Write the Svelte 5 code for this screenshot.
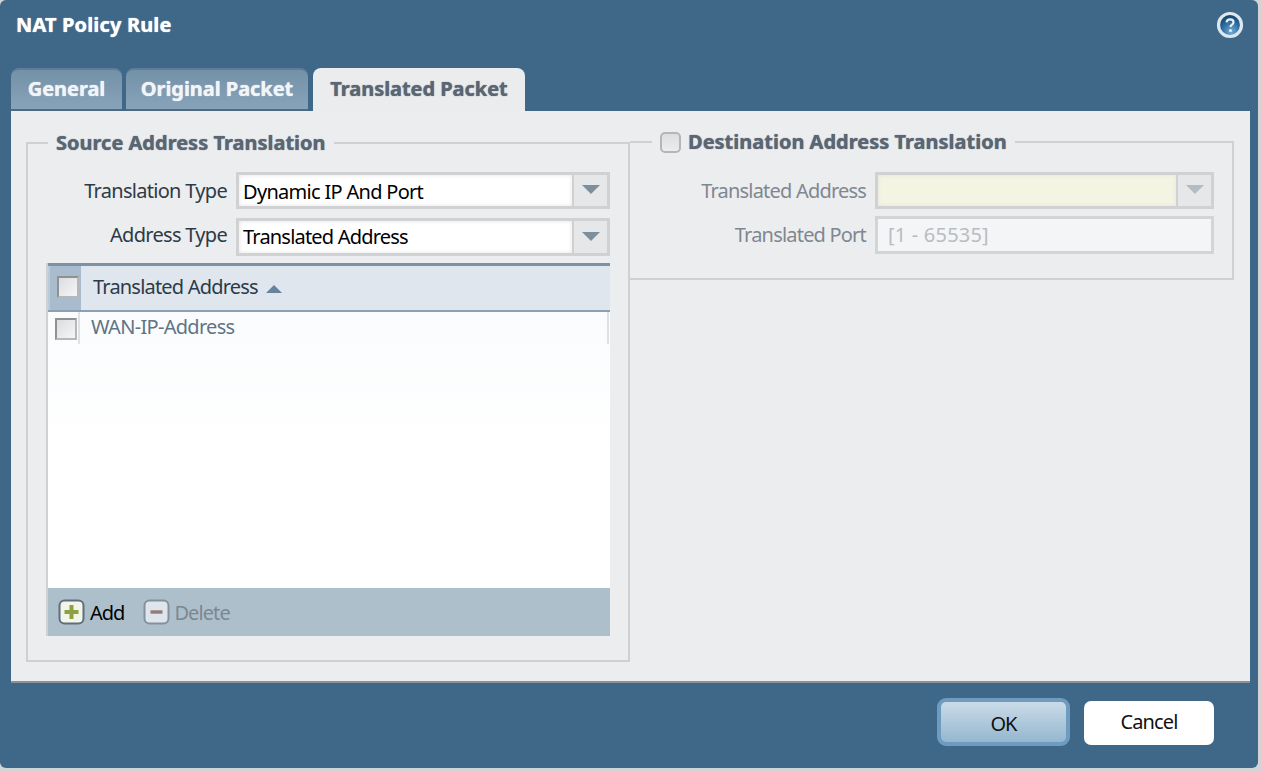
<script>
  const tabs = [
    { label: 'General', w: 111 },
    { label: 'Original Packet', w: 182 },
    { label: 'Translated Packet', w: 212, active: true }
  ];
</script>

<div class="page">
  <div class="dialog">
    <header class="titlebar">
      <h1>NAT Policy Rule</h1>
      <svg class="help" width="28" height="28" viewBox="0 0 28 28" aria-hidden="true">
        <defs>
          <radialGradient id="hg" cx="55%" cy="78%" r="72%">
            <stop offset="0" stop-color="#74aed6" />
            <stop offset="0.55" stop-color="#2f6d9f" />
            <stop offset="1" stop-color="#123f6b" />
          </radialGradient>
        </defs>
        <circle cx="14" cy="14" r="11.5" fill="url(#hg)" stroke="#dce7ee" stroke-width="3.2" />
        <path d="M10.6 11.4c.2-2 1.6-3 3.5-3 2 0 3.4 1.1 3.4 2.8 0 1.4-.8 2-1.7 2.7-.9.6-1.3 1-1.3 2" fill="none" stroke="#e8eff4" stroke-width="2.2" />
        <circle cx="14.5" cy="19.4" r="1.5" fill="#e8eff4" />
      </svg>
    </header>

    <nav class="tabs">
      {#each tabs as t}
        <div class="tab" class:active={t.active} style="width:{t.w}px">{t.label}</div>
      {/each}
    </nav>

    <main class="panel">
      <fieldset class="group left">
        <legend>Source Address Translation</legend>
        <div class="row r1">
          <span class="lbl">Translation Type</span>
          <div class="combo"><div class="val">Dynamic IP And Port</div><div class="arrow"><i></i></div></div>
        </div>
        <div class="row r2">
          <span class="lbl">Address Type</span>
          <div class="combo"><div class="val">Translated Address</div><div class="arrow"><i></i></div></div>
        </div>

        <div class="table">
          <div class="thead">
            <div class="cbcol"><span class="check"></span></div>
            <div class="th">Translated Address <i class="sort"></i></div>
          </div>
          <div class="tr">
            <div class="cbcell"><span class="check"></span></div>
            <div class="td">WAN-IP-Address</div>
          </div>
          <div class="tfill"></div>
          <div class="tfoot">
            <svg width="28" height="26" viewBox="0 0 28 26" aria-hidden="true">
              <rect x="1.5" y="1.5" width="24" height="23" rx="5" fill="#f3f5e8" stroke="#5e6f7c" stroke-width="2" />
              <path d="M13.5 6v14M6.5 13h14" stroke="#8ea142" stroke-width="4" />
            </svg>
            <span class="add">Add</span>
            <svg class="del" width="28" height="26" viewBox="0 0 28 26" aria-hidden="true">
              <rect x="1.5" y="1.5" width="24" height="23" rx="5" fill="#dfe5ec" stroke="#83919d" stroke-width="2" />
              <path d="M7.5 13h12" stroke="#957a7a" stroke-width="3.4" />
            </svg>
            <span class="delete">Delete</span>
          </div>
        </div>
      </fieldset>

      <fieldset class="group right">
        <legend><span class="legcheck"></span>Destination Address Translation</legend>
        <div class="row r3">
          <span class="lbl dim">Translated Address</span>
          <div class="combo off"><div class="val yellow"></div><div class="arrow"><i></i></div></div>
        </div>
        <div class="row r4">
          <span class="lbl dim">Translated Port</span>
          <div class="port">[1 - 65535]</div>
        </div>
      </fieldset>
    </main>

    <footer class="actions">
      <div class="btn ok">OK</div>
      <div class="btn cancel">Cancel</div>
    </footer>
  </div>
</div>

<style>
  :global(body) { margin: 0; background: #d2d4d6; }
  .page {
    width: 1262px;
    height: 772px;
    overflow: hidden;
    font-family: "Noto Sans", "Open Sans", sans-serif;
    font-size: 20px;
  }
  .dialog {
    box-sizing: border-box;
    width: 1258px;
    height: 768px;
    padding: 0 8px 0 11px;
    background: #3f6888;
    border-radius: 6px;
    display: flex;
    flex-direction: column;
  }
  .titlebar {
    height: 68px;
    flex: none;
    display: flex;
    justify-content: space-between;
    align-items: flex-start;
  }
  h1 {
    margin: 11px 0 0 5px;
    font-size: 20px;
    line-height: 27px;
    font-weight: 700;
    letter-spacing: 0.15px;
    color: #fff;
    text-shadow: 0 0 1px #fff;
  }
  .help { margin: 11px 6px 0 0; }
  .tabs {
    height: 43px;
    flex: none;
    display: flex;
    gap: 4px;
  }
  .tab {
    box-sizing: border-box;
    height: 43px;
    border-radius: 8px 8px 0 0;
    background: linear-gradient(#7391a8, #88a3b9);
    border-top: 2px solid #5f7f99;
    border-bottom: 2px solid #4e6a80;
    color: #f2f5f7;
    font-weight: 700;
    font-size: 20px;
    line-height: 38px;
    letter-spacing: -0.05px;
    text-align: center;
    text-shadow: 0 0 1px #f2f5f7;
  }
  .tab.active {
    background: #ebecee;
    border: 0;
    color: #5a6673;
    line-height: 41px;
    margin-left: 1px;
    text-shadow: 0 0 1px #5a6673;
  }
  .panel {
    box-sizing: border-box;
    height: 572px;
    flex: none;
    background: #ecedef;
    border-bottom: 2px solid #8e9296;
    padding: 20px 16px 0 15px;
    display: flex;
    align-items: flex-start;
  }
  .group {
    box-sizing: border-box;
    margin: 0;
    border: 2px solid #cfd0d2;
    min-width: 0;
  }
  legend {
    padding: 0 8px;
    font-weight: 700;
    font-size: 20px;
    line-height: 24px;
    color: #5a6673;
    display: flex;
    align-items: center;
    text-shadow: 0 0 1px #5a6673;
  }
  .left {
    width: 604px;
    height: 531px;
    padding: 17px 18px 0 18px;
  }
  .left legend { margin-left: 2px; }
  .right {
    width: 604px;
    height: 150px;
    margin-top: -1px;
    border-left: 0;
    padding: 18px 18px 0 0;
  }
  .right legend { margin-left: 22px; }
  .legcheck {
    box-sizing: border-box;
    width: 21px;
    height: 21px;
    margin-right: 7px;
    border: 2px solid #b4b7ba;
    border-radius: 5px;
    background: linear-gradient(#dcdee0, #eceded);
  }
  .row {
    display: flex;
    align-items: center;
  }
  .lbl {
    text-align: right;
    letter-spacing: -0.7px;
    color: #2d3a47;
    line-height: 26px;
    flex: none;
  }
  .r1, .r2 { margin-left: -18px; }
  .r1 .lbl, .r2 .lbl { width: 199px; margin-right: 9px; }
  .r2 .lbl { padding-bottom: 5px; }
  .r1 { height: 37px; }
  .r2 { height: 38px; margin-top: 9px; }
  .r3 .lbl, .r4 .lbl { width: 236px; margin-right: 9px; }
  .r3 { height: 37px; }
  .r4 { height: 38px; margin-top: 7px; }
  .dim { color: #7f878f; letter-spacing: -0.8px; }
  .combo {
    box-sizing: border-box;
    flex: 1;
    height: 100%;
    display: flex;
    border: 3px solid #d0d1d3;
    background: #e6e7e9;
  }
  .val {
    flex: 1;
    background: #fff;
    box-shadow: inset 0 0 4px #e3e3e3;
    color: #000;
    letter-spacing: -0.7px;
    padding-left: 4px;
    line-height: 34px;
  }
  .r2 .val { line-height: 31px; letter-spacing: -0.8px; }
  .val.yellow { background: #f3f4e2; }
  .arrow {
    width: 35px;
    flex: none;
    border-left: 2px solid #d0d1d3;
    box-sizing: border-box;
    display: flex;
    align-items: center;
    justify-content: center;
  }
  .arrow i {
    width: 0;
    height: 0;
    border-left: 9px solid transparent;
    border-right: 9px solid transparent;
    border-top: 9px solid #7d8f9d;
    margin-top: -2px;
  }
  .off .arrow i { border-top-color: #b1bcc4; }
  .port {
    box-sizing: border-box;
    flex: 1;
    height: 100%;
    border: 3px solid #d3d4d6;
    background: #f4f5f7;
    color: #b9bcc0;
    line-height: 32px;
    padding-left: 10px;
    letter-spacing: 0.2px;
  }
  .table {
    margin: 7px 0 0 0;
    height: 373px;
    border-left: 2px solid #cfd0d2;
    display: flex;
    flex-direction: column;
    background: linear-gradient(#f8fafc, #ffffff 50%);
  }
  .thead {
    box-sizing: border-box;
    height: 49px;
    flex: none;
    display: flex;
    border-top: 3px solid #7d92a5;
    border-bottom: 2px solid #8ba0b2;
    background: #dfe6ee;
  }
  .cbcol {
    width: 33px;
    flex: none;
    background: #a9bccd;
    display: flex;
    align-items: center;
    justify-content: center;
    border-left: 2px solid #bccbd8;
    box-sizing: border-box;
    padding: 0 0 3px 5px;
  }
  .check {
    box-sizing: border-box;
    display: block;
    width: 22px;
    height: 22px;
    border: 2px solid;
    border-color: #8f9193 #b5b7b9 #b5b7b9 #8f9193;
    background: linear-gradient(135deg, #dcdde0, #f6f6f7);
  }
  .th {
    padding: 0 0 3px 12px;
    line-height: 41px;
    color: #2d3a47;
    letter-spacing: -0.8px;
    display: flex;
    align-items: center;
    gap: 8px;
  }
  .sort {
    width: 0;
    height: 0;
    border-left: 8px solid transparent;
    border-right: 8px solid transparent;
    border-bottom: 8px solid #66829c;
    margin-top: 4px;
  }
  .tr {
    height: 32px;
    flex: none;
    display: flex;
    border-right: 2px solid #dfe0e2;
    margin-right: 1px;
  }
  .cbcell {
    width: 32px;
    flex: none;
    box-sizing: border-box;
    border-right: 2px solid #dfe2e6;
    display: flex;
    align-items: center;
    justify-content: center;
    padding: 2px 0 0 6px;
  }
  .td {
    padding-left: 11px;
    color: #5f7485;
    line-height: 30px;
    letter-spacing: -0.7px;
  }
  .tfill { flex: 1; }
  .tfoot {
    height: 48px;
    flex: none;
    background: #aebfcc;
    display: flex;
    align-items: center;
    padding-left: 10px;
  }
  .add { color: #000; letter-spacing: -1px; margin-left: 4px; }
  .del { margin-left: 19px; }
  .delete { color: #7d8791; letter-spacing: -0.9px; margin-left: 3px; }
  .actions {
    flex: 1;
    display: flex;
    justify-content: flex-end;
    align-items: flex-start;
    padding: 15px 36px 0 0;
    gap: 14px;
  }
  .btn {
    box-sizing: border-box;
    text-align: center;
    color: #111;
  }
  .ok {
    width: 133px;
    height: 48px;
    line-height: 44px;
    border: 4px solid #6d9cc0;
    border-radius: 9px;
    background: linear-gradient(#cbdbe8, #94b7d0);
    letter-spacing: -1px;
  }
  .cancel {
    width: 130px;
    height: 44px;
    margin-top: 3px;
    line-height: 42px;
    border-radius: 7px;
    background: #fff;
    letter-spacing: -0.9px;
  }
</style>
